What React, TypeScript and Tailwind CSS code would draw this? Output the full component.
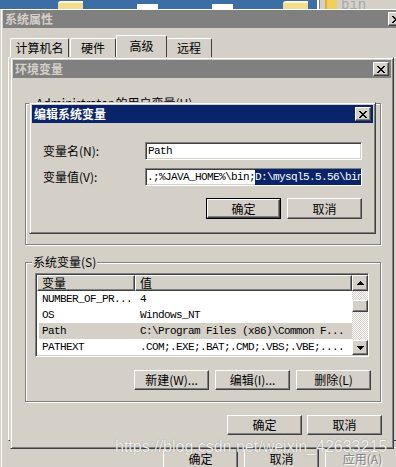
import React from 'react';

const ui = "font-['Noto_Sans_CJK_SC','Liberation_Sans',sans-serif] text-[12px] text-black";
const mono = "font-['Liberation_Mono','Noto_Sans_CJK_SC',monospace] text-[11px] tracking-[-0.6px] text-black";

// classic 3D borders
const frame =
  'border border-t-[#d4d0c8] border-l-[#d4d0c8] border-r-[#404040] border-b-[#404040] shadow-[inset_1px_1px_0_#fff,inset_-1px_-1px_0_#808080] p-[2px] bg-[#d4d0c8]';
const raised =
  'border border-t-white border-l-white border-r-[#404040] border-b-[#404040] shadow-[inset_-1px_-1px_0_#808080] bg-[#d4d0c8]';
const sunken =
  'border border-t-[#808080] border-l-[#808080] border-r-white border-b-white shadow-[inset_1px_1px_0_#404040,inset_-1px_-1px_0_#d4d0c8]';
const etched = 'border border-[#808080] shadow-[inset_1px_1px_0_#fff,1px_1px_0_#fff]';

const CloseBtn = () => (
  <div className={`${raised} w-[16px] h-[14px] flex items-center justify-center shrink-0`}>
    <svg width="8" height="7" viewBox="0 0 8 7" shapeRendering="crispEdges">
      <path
        d="M0 0h2v1H0zM6 0h2v1H6zM1 1h2v1H1zM5 1h2v1H5zM2 2h4v1H2zM3 3h2v1H3zM2 4h4v1H2zM1 5h2v1H1zM5 5h2v1H5zM0 6h2v1H0zM6 6h2v1H6z"
        fill="#000"
      />
    </svg>
  </div>
);

const Arrow = ({ down = false }: { down?: boolean }) => (
  <svg width="7" height="4" viewBox="0 0 7 4" shapeRendering="crispEdges">
    {down ? (
      <path d="M0 0h7v1H0zM1 1h5v1H1zM2 2h3v1H2zM3 3h1v1H3z" fill="#000" />
    ) : (
      <path d="M3 0h1v1H3zM2 1h3v1H2zM1 2h5v1H1zM0 3h7v1H0z" fill="#000" />
    )}
  </svg>
);

interface BtnProps {
  label: React.ReactNode;
  className?: string;
  isDefault?: boolean;
}

const Btn: React.FC<BtnProps> = ({ label, className = '', isDefault = false }) => {
  if (isDefault) {
    return (
      <div className={`border border-black shrink-0 ${className}`}>
        <div className={`${raised} w-full h-full flex items-center justify-center`}>{label}</div>
      </div>
    );
  }
  return (
    <div className={`${raised} shrink-0 flex items-center justify-center ${className}`}>{label}</div>
  );
};

const TitleBar = ({ title, active = false }: { title: string; active?: boolean }) => (
  <div
    className={`h-[18px] shrink-0 flex items-center justify-between pl-[2px] pr-[2px] ${
      active ? 'bg-[#0a246a] text-white' : 'bg-[#808080] text-[#d4d0c8]'
    }`}
  >
    <span className="font-bold text-[12px] leading-none">{title}</span>
    <CloseBtn />
  </div>
);

const rows = [
  { name: 'NUMBER_OF_PR...', value: '4' },
  { name: 'OS', value: 'Windows_NT' },
  { name: 'Path', value: 'C:\\Program Files (x86)\\Common F...', selected: true },
  { name: 'PATHEXT', value: '.COM;.EXE;.BAT;.CMD;.VBS;.VBE;....' },
];

export default function App() {
  return (
    <div className={`relative w-[396px] h-[467px] overflow-hidden bg-[#d4d0c8] flex flex-col ${ui}`}>
      {/* desktop strip behind the windows */}
      <div className="h-[9px] shrink-0 flex bg-[#3a6ea5] overflow-hidden">
        <div className="ml-[58px] mt-[1px] w-[25px] h-[8px] bg-[#f2dc8e] border-t-2 border-[#fff5cf] rounded-tl-[3px]" />
        <div className="ml-[54px] mt-[4px] w-[21px] h-[5px] bg-white" />
        <div className="ml-[54px] mt-[4px] w-[21px] h-[5px] bg-white" />
        <div className="ml-[50px] mt-[1px] w-[25px] h-[8px] bg-[#f2dc8e] border-t-2 border-[#fff5cf] rounded-tl-[3px]" />
        <div className="ml-[9px] w-[3px] h-full bg-white border-r border-[#808080]" />
        <div className="flex-1 bg-[#d4d0c8] flex">
          <div className="ml-[5px] w-[12px] h-[9px] bg-[#f0cf5c] border-l-2 border-[#e0b030]" />
          <span className="ml-[4px] -mt-[3px] font-['Liberation_Mono',monospace] text-[14px] leading-[16px] text-[#a8a8a8]">
            bin
          </span>
        </div>
      </div>

      {/* 系统属性 window */}
      <div className="w-[409px] flex-1 flex flex-col border-l border-t border-l-[#d4d0c8] border-t-white shadow-[inset_1px_0_0_#fff] pl-[2px]">
        <div className="pr-[3px]">
          <TitleBar title="系统属性" />
        </div>

        {/* tabs */}
        <div className="mt-[7px] h-[22px] flex items-end pl-[7px]">
          <div className="w-[59px] h-[19px] border-t border-l border-white border-r border-r-[#404040] rounded-t-[2px] flex items-center justify-center">
            计算机名
          </div>
          <div className="ml-[1px] w-[46px] h-[19px] border-t border-l border-white border-r border-r-[#404040] rounded-t-[2px] flex items-center justify-center">
            硬件
          </div>
          <div className="relative z-10 -mb-[1px] w-[51px] h-[23px] bg-[#d4d0c8] border-t border-l border-white border-r border-r-[#404040] rounded-t-[2px] flex items-center justify-center pb-[2px]">
            高级
          </div>
          <div className="w-[45px] h-[19px] border-t border-white border-r border-r-[#404040] rounded-t-[2px] flex items-center justify-center">
            远程
          </div>
        </div>

        {/* tab panel */}
        <div className="ml-[5px] w-[394px] h-[384px] shrink-0 border border-t-white border-l-white border-r-[#404040] border-b-[#404040]" />

        {/* sys props buttons */}
        <div className="mt-[6px] pl-[160px] flex gap-[6px]">
          <Btn label="确定" className="w-[75px] h-[23px]" />
          <Btn label="取消" className="w-[75px] h-[23px]" />
          <Btn
            label={<span className="text-[#808080] [text-shadow:1px_1px_0_#fff]">应用(A)</span>}
            className="w-[75px] h-[23px]"
          />
        </div>
      </div>

      {/* 环境变量 window */}
      <div className={`absolute z-10 left-[10px] top-[57px] w-[384px] h-[392px] flex flex-col ${frame}`}>
        <TitleBar title="环境变量" />
        <div className="flex flex-col pl-[12px] pr-[10px]">
          {/* user variables (mostly hidden) */}
          <div className={`relative mt-[25px] h-[142px] ${etched}`}>
            <span className="absolute -top-[9px] left-[9px] px-[1px] bg-[#d4d0c8] leading-[16px] whitespace-nowrap">
              Administrator 的用户变量(U)
            </span>
          </div>

          {/* system variables */}
          <div className={`relative mt-[17px] h-[140px] flex flex-col pt-[10px] pl-[9px] pr-[9px] ${etched}`}>
            <span className="absolute -top-[9px] left-[6px] px-[1px] bg-[#d4d0c8] leading-[16px] whitespace-nowrap">
              系统变量(S)
            </span>
            <div className={`mr-[2px] h-[84px] flex bg-white ${sunken}`}>
              <div className="flex-1 flex flex-col min-w-0 pl-[1px] pt-[1px]">
                <div className="h-[16px] flex shrink-0">
                  <div className={`${raised} w-[98px] pl-[4px] flex items-center leading-none`}>变量</div>
                  <div className={`${raised} flex-1 pl-[4px] flex items-center leading-none`}>值</div>
                </div>
                {rows.map((r) => (
                  <div
                    key={r.name}
                    className={`h-[16px] flex items-center ml-[2px] ${mono} ${r.selected ? 'bg-[#d4d0c8]' : ''}`}
                  >
                    <span className="w-[96px] pl-[3px] whitespace-nowrap overflow-hidden">{r.name}</span>
                    <span className="flex-1 pl-[5px] whitespace-nowrap overflow-hidden">{r.value}</span>
                  </div>
                ))}
              </div>
              {/* scrollbar */}
              <div className="w-[16px] flex flex-col pt-[1px] pb-[1px]">
                <div className={`${raised} h-[16px] flex items-center justify-center`}>
                  <Arrow />
                </div>
                <div className="flex-1 flex flex-col bg-[repeating-conic-gradient(#d4d0c8_0_25%,#ffffff_0_50%)] bg-[length:2px_2px]">
                  <div className={`${raised} mt-[9px] h-[12px]`} />
                </div>
                <div className={`${raised} h-[15px] flex items-center justify-center`}>
                  <Arrow down />
                </div>
              </div>
            </div>
            <div className="mt-[13px] h-[20px] flex justify-end gap-[6px]">
              <Btn label="新建(W)..." className="w-[75px] h-full" />
              <Btn label="编辑(I)..." className="w-[75px] h-full" />
              <Btn label="删除(L)" className="w-[75px] h-full" />
            </div>
          </div>

          <div className="mt-[13px] h-[20px] flex justify-end gap-[5px] -mr-[1px]">
            <Btn label="确定" className="w-[75px] h-full" />
            <Btn label="取消" className="w-[75px] h-full" />
          </div>
        </div>
      </div>

      {/* 编辑系统变量 dialog */}
      <div className={`absolute z-20 left-[29px] top-[102px] w-[347px] h-[132px] flex flex-col ${frame}`}>
        <TitleBar title="编辑系统变量" active />
        <div className="flex flex-col pl-[11px] pr-[11px]">
          <div className="mt-[19px] h-[18px] flex items-center">
            <span className="w-[102px] shrink-0">变量名(N):</span>
            <div className={`flex-1 h-full bg-white flex items-center pl-[2px] overflow-hidden ${sunken} ${mono}`}>
              Path
            </div>
          </div>
          <div className="mt-[8px] h-[18px] flex items-center">
            <span className="w-[102px] shrink-0">变量值(V):</span>
            <div
              className={`flex-1 h-full bg-white flex items-center pl-[1px] overflow-hidden whitespace-nowrap ${sunken} ${mono}`}
            >
              <span>{'.;%JAVA_HOME%\\bin;'}</span>
              <span className="bg-[#0a246a] text-white">{'D:\\mysql5.5.56\\bin'}</span>
            </div>
          </div>
          <div className="mt-[12px] h-[21px] flex justify-end gap-[6px]">
            <Btn label="确定" className="w-[75px] h-full" isDefault />
            <Btn label="取消" className="w-[75px] h-full" />
          </div>
        </div>
      </div>

      {/* watermark */}
      <span className="absolute z-30 left-[115px] top-[437px] font-['Liberation_Sans',sans-serif] text-[16px] leading-[20px] text-white/90 [text-shadow:0_0_1px_rgba(0,0,0,0.45)] whitespace-nowrap">
        https://blog.csdn.net/weixin_42633215
      </span>
    </div>
  );
}
